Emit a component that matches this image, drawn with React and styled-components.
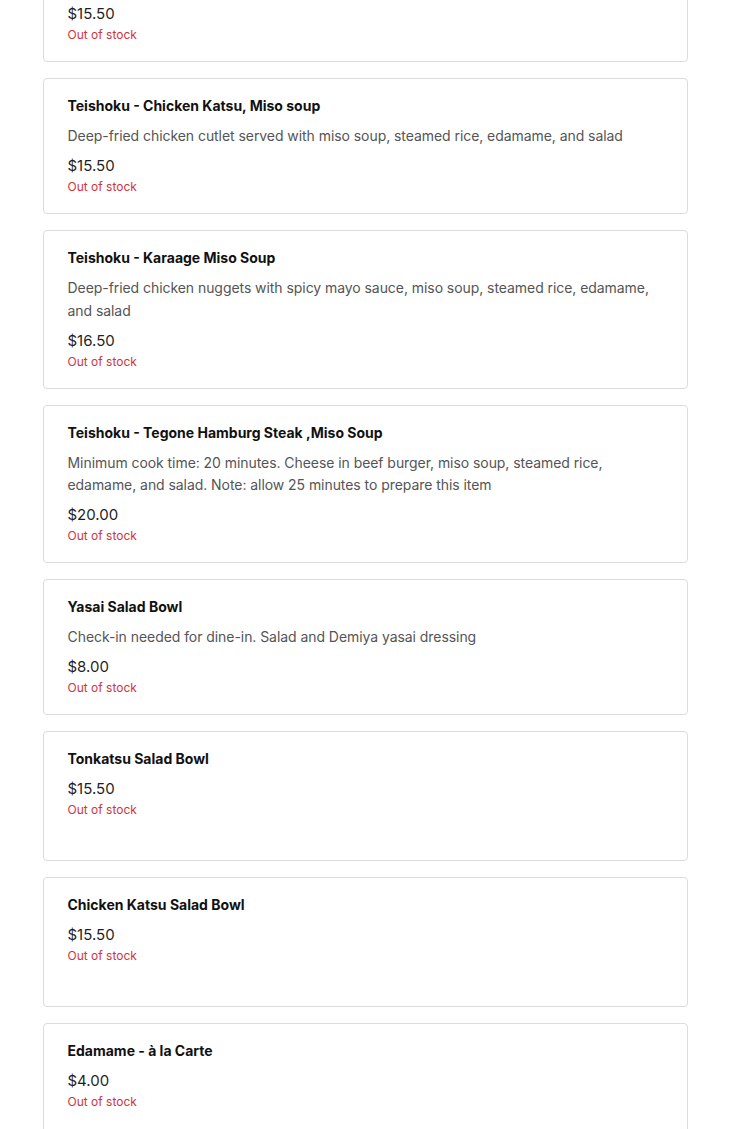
import React from 'react'
import styled, { createGlobalStyle } from 'styled-components'

const GlobalStyle = createGlobalStyle`
    body {
        margin: 0;
        background: #fff;
        font-family: Inter, "Noto Sans", sans-serif;
        overflow: hidden;
    }
`

const List = styled.section`
    width: 645px;
    margin: -74px auto 0;
    display: flex;
    flex-direction: column;
    gap: 16px;
`

const Card = styled.article`
    box-sizing: border-box;
    min-height: 130px;
    border: 1px solid #dcdcdc;
    border-radius: 4px;
    padding: 17px 24px 18px;
    display: flex;
    flex-direction: column;
`

const Title = styled.h6`
    margin: 0 0 9px;
    font-size: 14px;
    line-height: 20px;
    font-weight: 700;
    color: #111;
`

const Description = styled.p`
    margin: 0 0 7.5px;
    font-size: 14px;
    line-height: 22.5px;
    letter-spacing: -0.06px;
    color: #555;
`

const Price = styled.div`
    font-size: 15px;
    line-height: 22px;
    color: #1f1f1f;
`

const Stock = styled.div`
    margin-top: 2px;
    font-size: 12px;
    line-height: 16px;
    color: #d2343b;
`

const items = [
    {
        title: 'Teishoku - Tonkatsu, Miso soup',
        desc: 'Deep-fried pork cutlet served with miso soup, steamed rice, edamame, and salad',
        price: '$15.50'
    },
    {
        title: 'Teishoku - Chicken Katsu, Miso soup',
        desc: 'Deep-fried chicken cutlet served with miso soup, steamed rice, edamame, and salad',
        price: '$15.50'
    },
    {
        title: 'Teishoku - Karaage Miso Soup',
        desc: 'Deep-fried chicken nuggets with spicy mayo sauce, miso soup, steamed rice, edamame, and salad',
        price: '$16.50'
    },
    {
        title: 'Teishoku - Tegone Hamburg Steak ,Miso Soup',
        desc: 'Minimum cook time: 20 minutes. Cheese in beef burger, miso soup, steamed rice, edamame, and salad. Note: allow 25 minutes to prepare this item',
        price: '$20.00'
    },
    {
        title: 'Yasai Salad Bowl',
        desc: 'Check-in needed for dine-in. Salad and Demiya yasai dressing',
        price: '$8.00'
    },
    { title: 'Tonkatsu Salad Bowl', price: '$15.50' },
    { title: 'Chicken Katsu Salad Bowl', price: '$15.50' },
    { title: 'Edamame - à la Carte', price: '$4.00' }
]

const MenuItem = ({ item }) => (
    <Card>
        <Title>{item.title}</Title>
        {item.desc && <Description>{item.desc}</Description>}
        <Price>{item.price}</Price>
        <Stock>Out of stock</Stock>
    </Card>
)

export default function App() {
    return (
        <>
            <GlobalStyle />
            <List>
                {items.map((item) => (
                    <MenuItem key={item.title} item={item} />
                ))}
            </List>
        </>
    )
}
